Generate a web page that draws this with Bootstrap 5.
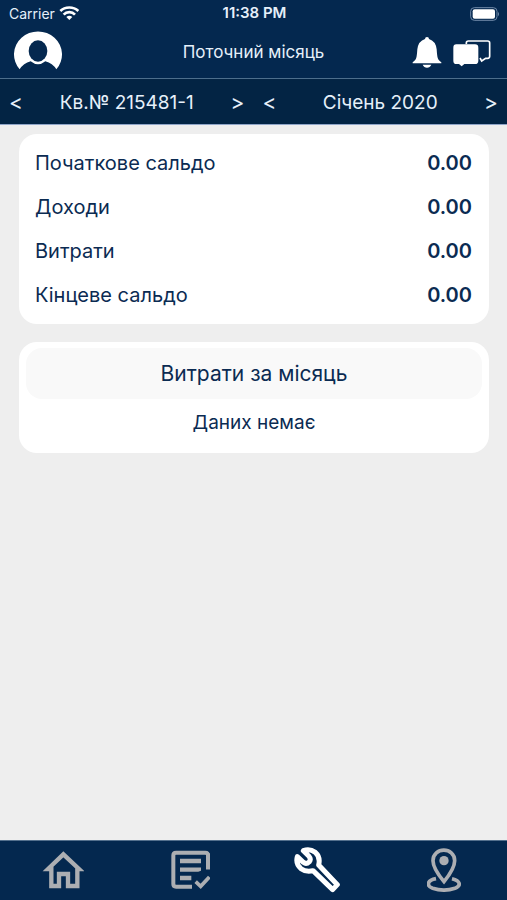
<!DOCTYPE html>
<html lang="uk">
<head>
<meta charset="utf-8">
<meta name="viewport" content="width=device-width, initial-scale=1">
<title>Поточний місяць</title>
<link href="https://cdn.jsdelivr.net/npm/bootstrap@5.3.0/dist/css/bootstrap.min.css" rel="stylesheet">
<style>
  body { font-family: Inter, "Liberation Sans", sans-serif; background: #eee; color: #0b2b52; }
  .app-bar { background: #04284f; color: #e6f0fa; }
  .status-line { height: 27px; font-size: 14px; padding: 0 7px 0 9px; }
  .clock { font-size: 15px; }
  .side { flex: 1 1 0; }
  .title-line { height: 51px; padding: 0 14px; }
  .title-line h1 { font-size: 17px; font-weight: 400; }
  .actions { gap: 11px; }
  .pickers { background: #032444; border-top: 1px solid #4d6e8c; border-bottom: 1px solid #8fa5c8; height: 47px; padding-top: 3px; font-size: 19px; }
  .pickers button { color: #e6f0fa; font-size: 21px; line-height: 28px; width: 32px; }
  .panel { border-radius: 18px; }
  .entry { line-height: 44px; font-size: 20px; }
  .balance { padding: 7px 17px 7px 16px; }
  .expenses { padding: 6px 7px; }
  .expenses h2 { background: #f9f9f9; border-radius: 16px; font-size: 21px; font-weight: 400; line-height: 51px; }
  .empty-note { font-size: 19px; line-height: 48px; }
  .content { padding: 9px 18px 9px 19px; gap: 18px; }
  .tabs { background: #04284f; height: 60px; border-top: 1px solid #54708d; padding-bottom: 2px; }
  svg { display: block; }
</style>
<script defer src="https://cdn.jsdelivr.net/npm/bootstrap@5.3.0/dist/js/bootstrap.bundle.min.js"></script>
</head>
<body class="d-flex flex-column min-vh-100">
<header class="app-bar">
  <div class="status-line d-flex align-items-center">
    <div class="side d-flex align-items-center gap-1">
      <span>Carrier</span>
      <svg width="20" height="15" viewBox="-6 -1 60 45" fill="none" stroke="#fff" stroke-width="8" aria-hidden="true"><path d="M-2 14C12 0 38 0 52 14"/><path d="M8 25C17 15 33 15 42 25"/><path d="M16 32Q25 25 34 32L25 41Z" fill="#fff" stroke="none"/></svg>
    </div>
    <span class="clock fw-semibold">11:38 PM</span>
    <div class="side d-flex justify-content-end">
      <svg width="30" height="14" viewBox="0 0 90 42" aria-hidden="true"><rect x="2" y="2" width="79" height="38" rx="11" fill="none" stroke="#6f89a8" stroke-width="3"/><rect x="8" y="7" width="67" height="28" rx="6" fill="#fff"/><path d="M84 14Q90 21 84 28Z" fill="#6f89a8"/></svg>
    </div>
  </div>
  <div class="title-line d-flex align-items-center">
    <div class="side">
      <button type="button" class="btn p-0 border-0" aria-label="Профіль">
        <svg width="48" height="43" viewBox="0 -3 144 129"><path d="M17 112A72 69 0 1 1 127 112Q116 94 94 88Q83 97 72 97T50 88Q28 94 17 112Z" fill="#fff"/><ellipse cx="72" cy="57" rx="28" ry="32" fill="#04284f"/></svg>
      </button>
    </div>
    <h1 class="m-0">Поточний місяць</h1>
    <div class="side actions d-flex justify-content-end align-items-center">
      <button type="button" class="btn p-0 border-0" aria-label="Сповіщення">
        <svg width="30" height="31" viewBox="0 -3 90 93" fill="#fff"><path d="M39 3A6 6 0 0 1 51 3Q71 9 74 34C76 60 76 65 88 73V76H2V73C14 65 14 60 16 34Q19 9 39 3Z"/><path d="M32 80H58Q54 89 45 89T32 80Z"/></svg>
      </button>
      <button type="button" class="btn p-0 border-0" aria-label="Повідомлення">
        <svg width="40" height="28" viewBox="0 -1 120 84"><path d="M40 14V11Q40 5 46 5H104Q110 5 110 11V51Q110 57 104 57H98L86 65L81 56" fill="none" stroke="#fff" stroke-width="5"/><path d="M10 15H66Q76 15 76 25V64Q76 74 66 74H34L26 81L18 74H10Q1 74 1 64V25Q1 15 10 15Z" fill="#fff"/></svg>
      </button>
    </div>
  </div>
  <div class="pickers row g-0 align-items-center">
    <div class="col d-flex align-items-center justify-content-between">
      <button type="button" class="btn p-0 border-0" aria-label="Попередня квартира">&lt;</button>
      <span>Кв.№ 215481-1</span>
      <button type="button" class="btn p-0 border-0" aria-label="Наступна квартира">&gt;</button>
    </div>
    <div class="col d-flex align-items-center justify-content-between">
      <button type="button" class="btn p-0 border-0" aria-label="Попередній місяць">&lt;</button>
      <span>Січень 2020</span>
      <button type="button" class="btn p-0 border-0" aria-label="Наступний місяць">&gt;</button>
    </div>
  </div>
</header>
<main class="content flex-grow-1 d-flex flex-column">
  <dl class="panel balance bg-white m-0">
    <div class="entry d-flex justify-content-between"><dt class="fw-normal">Початкове сальдо</dt><dd class="m-0 fw-semibold">0.00</dd></div>
    <div class="entry d-flex justify-content-between"><dt class="fw-normal">Доходи</dt><dd class="m-0 fw-semibold">0.00</dd></div>
    <div class="entry d-flex justify-content-between"><dt class="fw-normal">Витрати</dt><dd class="m-0 fw-semibold">0.00</dd></div>
    <div class="entry d-flex justify-content-between"><dt class="fw-normal">Кінцеве сальдо</dt><dd class="m-0 fw-semibold">0.00</dd></div>
  </dl>
  <section class="panel expenses bg-white text-center">
    <h2 class="m-0">Витрати за місяць</h2>
    <p class="empty-note m-0">Даних немає</p>
  </section>
</main>
<nav class="tabs row g-0 align-items-center" aria-label="Розділи">
  <div class="col d-flex justify-content-center"><a href="#home" aria-label="Головна">
    <svg width="42" height="38" viewBox="38 47 126 114" fill="none" stroke="#acaeb2" stroke-width="13"><path d="M102 57L56 101H66V152H89V116H116V152H144V101H149Z"/></svg></a></div>
  <div class="col d-flex justify-content-center"><a href="#tasks" aria-label="Завдання">
    <svg width="40" height="40" viewBox="46 46 120 120" fill="none" stroke="#acaeb2"><path d="M160 104V62Q160 54 152 54H64Q56 54 56 62V148Q56 156 64 156H112" stroke-width="12"/><path d="M76 79H139M76 105H139M76 130H110" stroke-width="13"/><path d="M114 144Q118 108 152 105L170 125L138 166L114 157Z" fill="#04284f" stroke="none"/><path d="M160 56V104" stroke-width="12"/><path d="M123 141L138 155L164 127" stroke-width="11"/></svg></a></div>
  <div class="col d-flex justify-content-center"><a href="#service" aria-label="Обслуговування" aria-current="page">
    <svg width="46" height="46" viewBox="41 37 138 138" fill="none" stroke="#fff" stroke-width="15" stroke-linejoin="round"><path d="M69 48Q88 41 105 53Q121 67 115 91L171 150L157 165L98 108Q77 113 62 102Q45 87 51 66L69 83Q78 90 87 81Q93 73 86 65Z"/></svg></a></div>
  <div class="col d-flex justify-content-center"><a href="#map" aria-label="Мапа">
    <svg width="34" height="44" viewBox="51 42 102 132" fill="none" stroke="#acaeb2" stroke-width="11"><path d="M102 143Q69 103 69 80C69 38 134 38 134 80Q134 103 102 143Z"/><circle cx="102" cy="80" r="14" fill="#acaeb2" stroke="none"/><path d="M78 134C50 139 49 156 68 163Q102 174 135 163C155 155 151 140 126 134"/></svg></a></div>
</nav>
</body>
</html>
